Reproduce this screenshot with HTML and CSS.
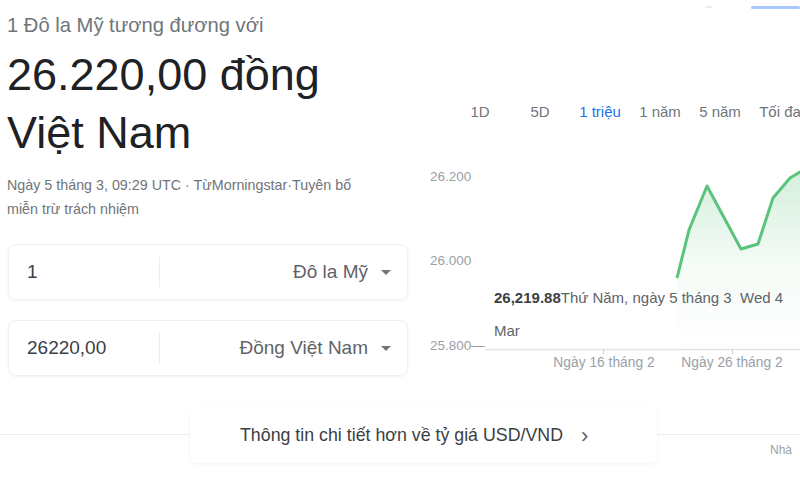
FILE: index.html
```html
<!DOCTYPE html>
<html lang="vi">
<head>
<meta charset="utf-8">
<title>USD VND</title>
<link rel="stylesheet" href="styles.css">
</head>
<body>
<div class="page">
  <div class="top">
    <div class="left">
      <div class="eq">1 Đô la Mỹ tương đương với</div>
      <div class="big">26.220,00 đồng Việt Nam</div>
      <div class="meta">Ngày 5 tháng 3, 09:29 UTC · TừMorningstar·Tuyên bố miễn trừ trách nhiệm</div>
      <div class="field">
        <div class="amount">1</div>
        <div class="sel">Đô la Mỹ<span class="caret"></span></div>
      </div>
      <div class="field">
        <div class="amount">26220,00</div>
        <div class="sel">Đồng Việt Nam<span class="caret"></span></div>
      </div>
    </div>
    <div class="right">
      <div class="strip"><span class="dash"></span><span class="bar"></span></div>
      <div class="tabs">
        <span class="tab">1D</span>
        <span class="tab">5D</span>
        <span class="tab active">1 triệu</span>
        <span class="tab">1 năm</span>
        <span class="tab">5 năm</span>
        <span class="tab">Tối đa</span>
      </div>
      <div class="chart">
        <svg class="plot" width="400" height="230" viewBox="0 0 400 230">
          <defs>
            <linearGradient id="g" x1="0" y1="0" x2="0" y2="1">
              <stop offset="0" stop-color="#5cc27c" stop-opacity="0.28"/>
              <stop offset="0.55" stop-color="#5cc27c" stop-opacity="0.06"/>
              <stop offset="1" stop-color="#5cc27c" stop-opacity="0"/>
            </linearGradient>
          </defs>
          <polygon points="257,118 269,70 287,26 321,89 338,84 353,38 370,18 380,12 400,4 400,189 257,189" fill="url(#g)"/>
          <polyline points="257,118 269,70 287,26 321,89 338,84 353,38 370,18 380,12 400,4" fill="none" stroke="#5ac47c" stroke-width="3" stroke-linejoin="round"/>
          <line x1="65" y1="189.5" x2="400" y2="189.5" stroke="#e4e4e4" stroke-width="1.5"/>
          <line x1="183.5" y1="189" x2="183.5" y2="194" stroke="#cfcfcf" stroke-width="1"/>
          <line x1="312.5" y1="189" x2="312.5" y2="194" stroke="#cfcfcf" stroke-width="1"/>
        </svg>
        <span class="ylab y1">26.200</span>
        <span class="ylab y2">26.000</span>
        <span class="ylab y3">25.800—</span>
        <span class="xlab x1">Ngày 16 tháng 2</span>
        <span class="xlab x2">Ngày 26 tháng 2</span>
        <div class="tip">
          <div class="tip-line"><span class="num">26,219.88</span><span class="date">Thứ Năm, ngày 5 tháng 3&nbsp; Wed 4</span></div>
          <div class="tip-line">Mar</div>
        </div>
      </div>
    </div>
  </div>
  <div class="more">
    <div class="seg-left"></div>
    <div class="btn">Thông tin chi tiết hơn về tỷ giá USD/VND<span class="chev">›</span></div>
    <div class="seg-right"><div class="rline"></div><div class="note">Nhà</div></div>
  </div>
</div>
</body>
</html>
```
FILE: styles.css
```css
html, body {
  margin: 0;
  padding: 0;
  background: #fff;
}
body {
  width: 800px;
  height: 500px;
  overflow: hidden;
  font-family: "Liberation Sans", Arial, sans-serif;
  color: #202124;
}
.page {
  width: 800px;
}
.top {
  display: flex;
  height: 408px;
}
.left {
  width: 420px;
  flex: none;
  padding: 13px 0 0 7px;
  box-sizing: border-box;
}
.eq {
  font-size: 20.2px;
  line-height: 24px;
  color: #70757a;
  white-space: nowrap;
}
.big {
  margin-top: 9px;
  font-size: 45px;
  line-height: 58px;
  color: #202124;
  width: 340px;
}
.meta {
  margin-top: 11px;
  font-size: 14.3px;
  line-height: 24px;
  color: #70757a;
  width: 372px;
}
.field {
  margin: 23px 0 0 1px;
  width: 400px;
  height: 56px;
  box-sizing: border-box;
  border: 1px solid #f0f0f0;
  border-radius: 8px;
  box-shadow: 0 1px 3px rgba(0,0,0,0.05);
  display: flex;
  align-items: center;
}
.field + .field {
  margin-top: 20px;
}
.amount {
  width: 151px;
  box-sizing: border-box;
  padding-left: 18px;
  font-size: 19px;
  color: #3c4043;
  border-right: 1px solid #ececec;
  height: 30px;
  line-height: 30px;
}
.sel {
  flex: 1;
  display: flex;
  justify-content: flex-end;
  align-items: center;
  padding-right: 16px;
  font-size: 19px;
  color: #5f6368;
}
.caret {
  margin-left: 13px;
  width: 0;
  height: 0;
  border-left: 5px solid transparent;
  border-right: 5px solid transparent;
  border-top: 5px solid #70757a;
}
.right {
  flex: 1;
  min-width: 0;
}
.strip {
  height: 16px;
  display: flex;
  align-items: flex-start;
  padding-top: 6px;
  box-sizing: border-box;
}
.dash {
  margin-left: 285px;
  width: 8px;
  height: 2px;
  background: #ececec;
}
.bar {
  margin-left: 39px;
  width: 60px;
  height: 3px;
  border-radius: 2px;
  background: #a8c7fa;
}
.tabs {
  margin-top: 85px;
  padding-left: 30px;
  display: flex;
  height: 20px;
  align-items: center;
  white-space: nowrap;
}
.tab {
  flex: none;
  width: 60px;
  text-align: center;
  font-size: 15px;
  color: #70757a;
}
.tab.active {
  color: #1a73e8;
}
.chart {
  position: relative;
  margin-top: 39px;
  height: 230px;
}
.plot {
  position: absolute;
  left: 0;
  top: 0;
}
.ylab {
  position: absolute;
  left: 10px;
  font-size: 13.5px;
  line-height: 16px;
  color: #9aa0a6;
  white-space: nowrap;
}
.y1 { top: 9px; }
.y2 { top: 93px; }
.y3 { top: 178px; }
.xlab {
  position: absolute;
  top: 195px;
  font-size: 13.8px;
  line-height: 16px;
  color: #9aa0a6;
  white-space: nowrap;
  transform: translateX(-50%);
}
.x1 { left: 184px; }
.x2 { left: 312px; }
.tip {
  position: absolute;
  left: 74px;
  top: 121px;
  width: 300px;
  font-size: 15px;
  line-height: 33px;
  color: #5f6368;
}
.tip-line {
  white-space: nowrap;
}
.num {
  font-weight: bold;
  color: #3c4043;
}
.more {
  display: flex;
  height: 55px;
}
.seg-left {
  width: 190px;
  flex: none;
  height: 1px;
  margin-top: 26px;
  background: #ededed;
}
.btn {
  width: 467px;
  flex: none;
  box-sizing: border-box;
  padding-left: 50px;
  display: flex;
  align-items: center;
  border-radius: 6px;
  box-shadow: 0 1px 4px rgba(0,0,0,0.05);
  font-size: 17.8px;
  color: #3c4043;
  white-space: nowrap;
}
.chev {
  margin-left: 18px;
  font-size: 22px;
  color: #5f6368;
}
.seg-right {
  flex: 1;
  min-width: 0;
}
.rline {
  margin-top: 26px;
  height: 1px;
  background: #ededed;
}
.note {
  margin-top: 8px;
  padding-left: 113px;
  font-size: 12px;
  color: #9aa0a6;
  white-space: nowrap;
}
```
